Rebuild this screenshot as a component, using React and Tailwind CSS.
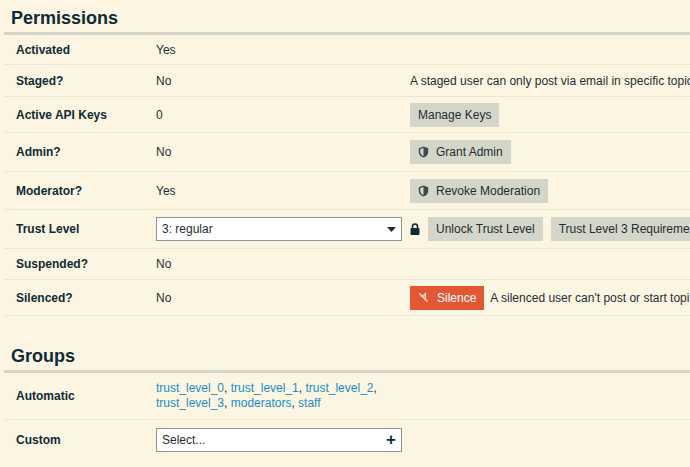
const F = { fontFamily: '"Liberation Sans", Arial, sans-serif' };

function Shield() {
  return (
    <svg width="11" height="12" viewBox="0 0 12 14" className="mr-[7px] shrink-0">
      <path d="M6 0.5L11.5 2.5V7c0 3.2-2.5 5.6-5.5 6.5C3 12.6.5 10.2.5 7V2.5z" fill="#3d4a50" />
      <path d="M6 2.2V11.8C4 11 2.2 9.2 2.2 7V3.6z" fill="#d3d6c8" />
    </svg>
  );
}

function Btn({ children, icon }) {
  return (
    <span className="inline-flex items-center whitespace-nowrap shrink-0 h-[24px] px-[8px] bg-[#d3d6c8] text-[#1f2d33] text-[12px]">
      {icon}
      {children}
    </span>
  );
}

function Row({ label, value, h, children }) {
  return (
    <div className={`flex items-center border-b border-[#ebe6d3] ${h}`}>
      <div className="w-[152px] shrink-0 pl-[12px] font-bold text-[12px] text-[#0f2b35]">{label}</div>
      <div className="w-[254px] shrink-0 text-[12px] text-[#1f2d33]">{value}</div>
      <div className="flex-1 flex items-center whitespace-nowrap text-[12px] text-[#1f2d33]">{children}</div>
    </div>
  );
}

const L = ({ children }) => <span className="text-[#1a8fc7]">{children}</span>;

export default function App() {
  return (
    <div style={F} className="w-[690px] h-[467px] bg-[#fcf5e2] pl-[4px] overflow-hidden">
      <div className="h-[35px] flex items-end pb-[5px] pl-[7px] border-b-[3px] border-[#d3d6c8]">
        <h2 className="text-[18px] font-bold text-[#0f2b35] leading-none">Permissions</h2>
      </div>
      <Row label="Activated" value="Yes" h="h-[30px]" />
      <Row label="Staged?" value="No" h="h-[32px]">A staged user can only post via email in specific topics.</Row>
      <Row label="Active API Keys" value="0" h="h-[36px]"><Btn>Manage Keys</Btn></Row>
      <Row label="Admin?" value="No" h="h-[39px]"><Btn icon={<Shield />}>Grant Admin</Btn></Row>
      <Row label="Moderator?" value="Yes" h="h-[38px]"><Btn icon={<Shield />}>Revoke Moderation</Btn></Row>
      <div className="flex items-center border-b border-[#ebe6d3] h-[39px]">
        <div className="w-[152px] shrink-0 pl-[12px] font-bold text-[12px] text-[#0f2b35]">Trust Level</div>
        <div className="w-[254px] shrink-0 flex">
          <div className="w-[246px] h-[24px] border border-[#8d959a] bg-white flex items-center justify-between px-[5px] text-[12px] text-[#1f2d33]">
            3: regular
            <svg width="9" height="5" viewBox="0 0 9 5"><path d="M0 0h9L4.5 5z" fill="#1f2d33" /></svg>
          </div>
        </div>
        <div className="flex items-center gap-[8px]">
          <svg width="10" height="12" viewBox="0 0 10 12" className="shrink-0">
            <path d="M2.5 5V3.5a2.5 2.5 0 015 0V5" stroke="#0f2b35" strokeWidth="1.6" fill="none" />
            <rect x="0.5" y="5" width="9" height="7" rx="1" fill="#0f2b35" />
          </svg>
          <Btn>Unlock Trust Level</Btn>
          <Btn>Trust Level 3 Requirements</Btn>
        </div>
      </div>
      <Row label="Suspended?" value="No" h="h-[31px]" />
      <Row label="Silenced?" value="No" h="h-[36px]">
        <span className="inline-flex items-center h-[24px] px-[8px] bg-[#e45735] text-white text-[12px] mr-[6px]">
          <svg width="11" height="11" viewBox="0 0 12 12" className="mr-[8px]">
            <path d="M3 4.5h2l3-2.5v6.5" stroke="#f5d2c8" strokeWidth="1.6" fill="none" />
            <path d="M1.5 1.5l9 9" stroke="#f5d2c8" strokeWidth="1.6" />
          </svg>
          Silence
        </span>
        A silenced user can't post or start topics.
      </Row>
      <div className="h-[57px] flex items-end pb-[5px] pl-[7px] border-b-[3px] border-[#d3d6c8]">
        <h2 className="text-[18px] font-bold text-[#0f2b35] leading-none">Groups</h2>
      </div>
      <div className="flex items-center border-b border-[#ebe6d3] h-[47px]">
        <div className="w-[152px] shrink-0 pl-[12px] font-bold text-[12px] text-[#0f2b35]">Automatic</div>
        <div className="w-[254px] text-[12px] text-[#1f2d33] leading-[15px] whitespace-nowrap">
          <L>trust_level_0</L>, <L>trust_level_1</L>, <L>trust_level_2</L>,<br />
          <L>trust_level_3</L>, <L>moderators</L>, <L>staff</L>
        </div>
      </div>
      <div className="flex items-center h-[39px]">
        <div className="w-[152px] shrink-0 pl-[12px] font-bold text-[12px] text-[#0f2b35]">Custom</div>
        <div className="w-[246px] h-[24px] border border-[#8d959a] bg-white flex items-center justify-between px-[5px] text-[12px] text-[#1f2d33]">
          Select...
          <span className="text-[17px] font-bold leading-none text-[#0f2b35]">+</span>
        </div>
      </div>
    </div>
  );
}
